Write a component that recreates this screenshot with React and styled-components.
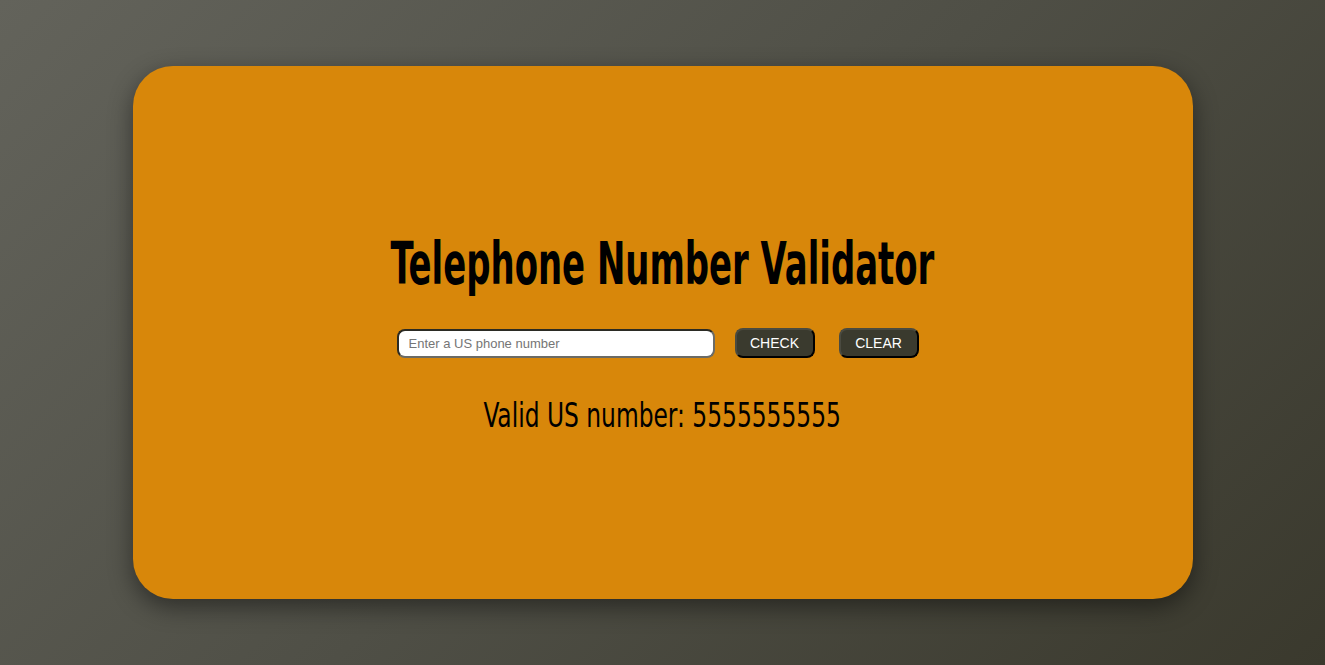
import React, { useState } from "react";
import styled, { createGlobalStyle } from "styled-components";

const GlobalStyle = createGlobalStyle`
  html, body {
    margin: 0;
    padding: 0;
  }
  body {
    min-height: 100vh;
    background: linear-gradient(135deg, #63635b 0%, #4f4f46 50%, #3a392d 100%);
    font-family: "Liberation Sans", Arial, sans-serif;
  }
`;

const Page = styled.main`
  height: 665px;
  display: flex;
  align-items: center;
  justify-content: center;
`;

const Card = styled.section`
  width: 1060px;
  height: 533px;
  background: #d8870a;
  border-radius: 40px;
  box-shadow: 0 8px 24px rgba(0, 0, 0, 0.45);
  display: flex;
  flex-direction: column;
  align-items: center;
  justify-content: center;
  box-sizing: border-box;
`;

const Title = styled.h1`
  margin: 0;
  font-family: "DejaVu Sans Condensed", "DejaVu Sans", sans-serif;
  font-weight: 700;
  font-size: 58px;
  color: #000;
  transform: scaleX(0.65);
`;

const Controls = styled.div`
  display: flex;
  align-items: center;
  gap: 20px;
  margin-top: 30px;
  margin-right: 10px;
`;

const PhoneInput = styled.input`
  width: 318px;
  height: 29px;
  box-sizing: border-box;
  border: 2px solid #2b2b24;
  border-right-color: #6b6b66;
  border-bottom-color: #6b6b66;
  border-radius: 8px;
  padding: 0 10px;
  font-family: "Liberation Sans", Arial, sans-serif;
  font-size: 13px;
  background: #fff;
  outline: none;
  &::placeholder {
    color: #757575;
  }
`;

const Button = styled.button`
  width: 80px;
  height: 30px;
  box-sizing: border-box;
  background: #3a3a2e;
  color: #fff;
  border: 2px solid #000;
  border-top-color: #4a4a40;
  border-left-color: #4a4a40;
  border-radius: 8px;
  font-family: "Liberation Sans", Arial, sans-serif;
  font-size: 14px;
  cursor: pointer;
  margin-left: ${(p) => (p.$extra ? "4px" : "0")};
`;

const Result = styled.p`
  margin: 38px 0 0;
  font-family: "DejaVu Sans Condensed", "DejaVu Sans", sans-serif;
  font-size: 33px;
  color: #000;
  transform: scaleX(0.787);
`;

export default function App() {
  const [value, setValue] = useState("");
  const [result, setResult] = useState("Valid US number: 5555555555");

  return (
    <>
      <GlobalStyle />
      <Page>
        <Card>
          <Title>Telephone Number Validator</Title>
          <Controls>
            <PhoneInput
              placeholder="Enter a US phone number"
              value={value}
              onChange={(e) => setValue(e.target.value)}
            />
            <Button onClick={() => setResult(value ? `Valid US number: ${value}` : result)}>CHECK</Button>
            <Button $extra onClick={() => { setValue(""); setResult(""); }}>CLEAR</Button>
          </Controls>
          <Result>{result}</Result>
        </Card>
      </Page>
    </>
  );
}
